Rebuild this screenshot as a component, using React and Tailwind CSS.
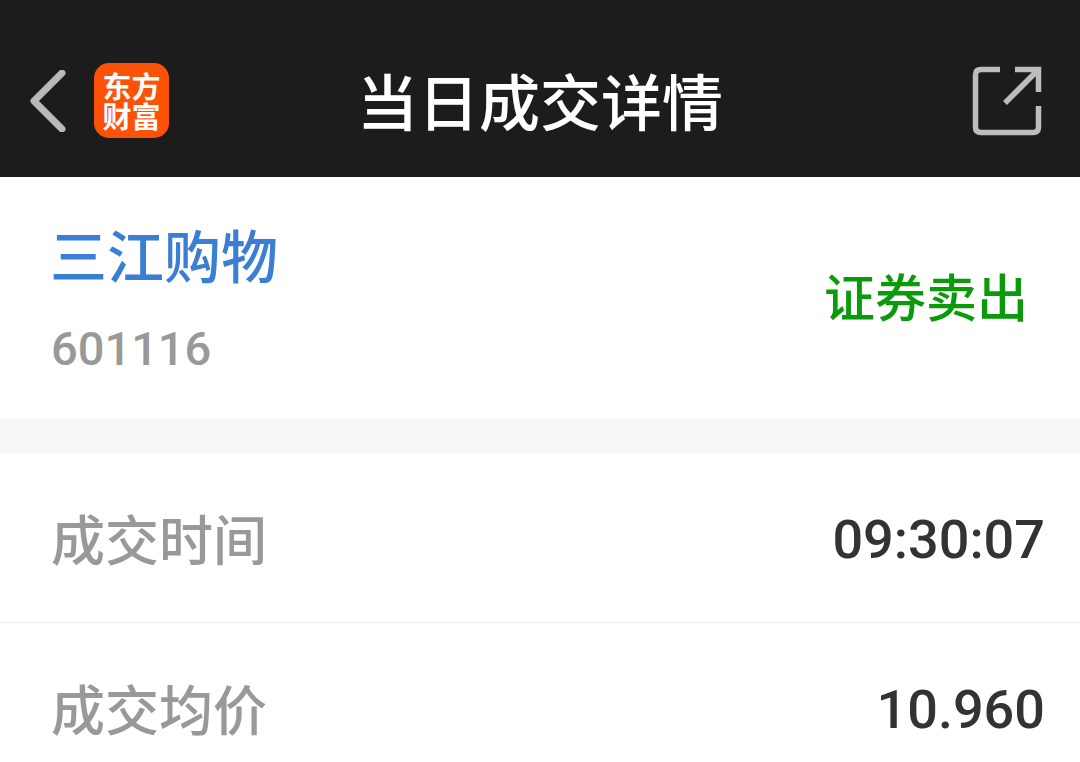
import React from 'react';

const cjk = "font-['Noto_Sans_CJK_SC','Noto_Sans',sans-serif]";

const Row = ({ label, value, border }) => (
  <div className={`flex items-center justify-between h-[170px] pl-[51px] pr-[35px] ${border ? 'border-b border-[#eeeeee]' : ''}`}>
    <span className="text-[54px] leading-none font-medium text-[#999999]">{label}</span>
    <span className="pt-[4px] text-[54px] leading-none font-medium text-[#333333] font-['Roboto',sans-serif]">{value}</span>
  </div>
);

export default function App() {
  return (
    <div className={`w-[1080px] h-[762px] overflow-hidden bg-white ${cjk}`}>
      {/* header */}
      <div className="relative flex items-center justify-between h-[177px] pt-[24px] pl-[29px] pr-[38px] bg-[#1c1c1c]">
        <div className="flex items-center gap-[27px]">
          <svg width="38" height="62" viewBox="0 0 38 62" fill="none">
            <path d="M33 3 L5 31 L33 59" stroke="#b9b9b9" strokeWidth="7" strokeLinecap="round" strokeLinejoin="round" />
          </svg>
          <div className="w-[75px] h-[75px] pt-[7px] rounded-[15px] bg-[#fb5208] text-center text-white text-[29px] leading-[30px] font-semibold">
            东方<br />财富
          </div>
        </div>
        <div className="absolute left-0 right-0 top-[22px] bottom-0 flex items-center justify-center text-[61px] font-medium text-white">
          当日成交详情
        </div>
        <svg width="70" height="70" viewBox="0 0 70 70" fill="none" stroke="#bdbdbd" strokeWidth="5.5">
          <path d="M28 3.5 H9 Q3.5 3.5 3.5 9 V61 Q3.5 66.500 9 66.500 H61 Q66.500 66.500 66.500 61 V40" />
          <path d="M33 37 L65 5 M43 3.500 H66.500 V26" />
        </svg>
      </div>

      {/* stock */}
      <div className="flex items-center justify-between h-[242px] px-[52px]">
        <div className="flex flex-col gap-[43px] -ml-[2px]">
          <span className="text-[57px] leading-none font-medium text-[#3b7fd4]">三江购物</span>
          <span className="pl-[1px] text-[47px] leading-none font-medium text-[#999999] font-['Roboto',sans-serif]">601116</span>
        </div>
        <span className="pb-[6px] text-[51px] leading-none font-medium text-[#0a9a0a]">证券卖出</span>
      </div>
      <div className="h-[34px] bg-[#f6f7f9]" />

      <Row label="成交时间" value="09:30:07" border />
      <Row label="成交均价" value="10.960" />
    </div>
  );
}
